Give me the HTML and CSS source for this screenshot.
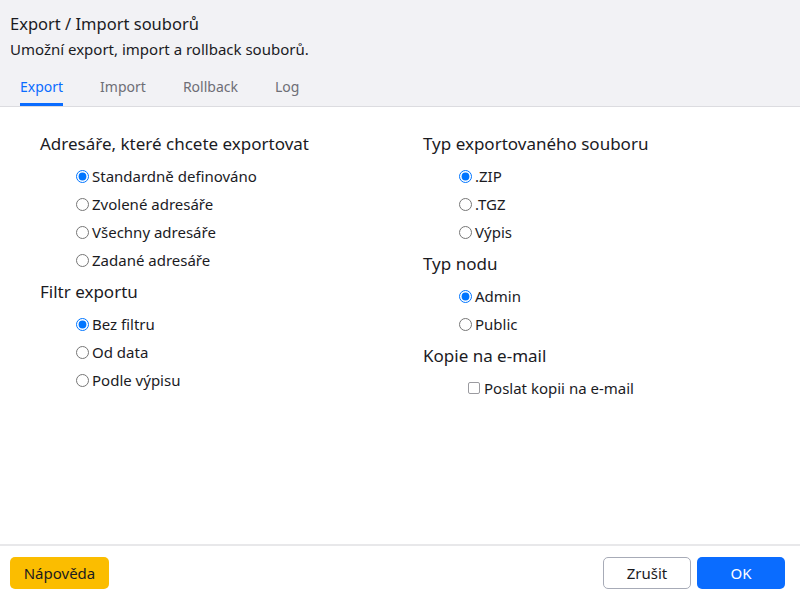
FILE: index.html
```html
<!DOCTYPE html>
<html lang="cs">
<head>
<meta charset="utf-8">
<title>Export / Import souborů</title>
<link rel="stylesheet" href="styles.css">
</head>
<body>
<div class="dialog">
  <header class="head">
    <h1 class="title">Export / Import souborů</h1>
    <p class="subtitle">Umožní export, import a rollback souborů.</p>
    <nav class="tabs">
      <span class="tab active">Export</span>
      <span class="tab">Import</span>
      <span class="tab">Rollback</span>
      <span class="tab">Log</span>
    </nav>
  </header>
  <main class="body">
    <section class="col">
      <h2 class="group-title">Adresáře, které chcete exportovat</h2>
      <div class="options">
        <label class="opt"><input type="radio" name="dir" checked>Standardně definováno</label>
        <label class="opt"><input type="radio" name="dir">Zvolené adresáře</label>
        <label class="opt"><input type="radio" name="dir">Všechny adresáře</label>
        <label class="opt"><input type="radio" name="dir">Zadané adresáře</label>
      </div>
      <h2 class="group-title">Filtr exportu</h2>
      <div class="options">
        <label class="opt"><input type="radio" name="flt" checked>Bez filtru</label>
        <label class="opt"><input type="radio" name="flt">Od data</label>
        <label class="opt"><input type="radio" name="flt">Podle výpisu</label>
      </div>
    </section>
    <section class="col">
      <h2 class="group-title">Typ exportovaného souboru</h2>
      <div class="options">
        <label class="opt"><input type="radio" name="typ" checked>.ZIP</label>
        <label class="opt"><input type="radio" name="typ">.TGZ</label>
        <label class="opt"><input type="radio" name="typ">Výpis</label>
      </div>
      <h2 class="group-title">Typ nodu</h2>
      <div class="options">
        <label class="opt"><input type="radio" name="node" checked>Admin</label>
        <label class="opt"><input type="radio" name="node">Public</label>
      </div>
      <h2 class="group-title">Kopie na e-mail</h2>
      <div class="options checks">
        <label class="opt"><input type="checkbox" class="check">Poslat kopii na e-mail</label>
      </div>
    </section>
  </main>
  <footer class="foot">
    <button class="btn btn-help">Nápověda</button>
    <div class="actions">
      <button class="btn btn-cancel">Zrušit</button>
      <button class="btn btn-ok">OK</button>
    </div>
  </footer>
</div>
</body>
</html>
```
FILE: styles.css
```css
* { box-sizing: border-box; }
html, body { margin: 0; padding: 0; }
body {
  font-family: "Noto Sans", "Open Sans", sans-serif;
  color: #1b1b1f;
  background: #fff;
  width: 800px;
  height: 600px;
  overflow: hidden;
}
.dialog {
  display: flex;
  flex-direction: column;
  height: 600px;
}
.head {
  background: #f2f2f5;
  border-bottom: 1px solid #dcdce0;
  padding: 13px 10px 0 10px;
}
.title {
  font-size: 16.5px;
  font-weight: 400;
  margin: 0;
  line-height: 22px;
}
.subtitle {
  font-size: 15px;
  margin: 4px 0 0 0;
  line-height: 20px;
}
.tabs {
  display: flex;
  gap: 37px;
  margin-top: 10px;
  padding-left: 10px;
}
.tab {
  font-size: 14px;
  color: #6e6e76;
  padding: 8px 0 6px 0;
  line-height: 20px;
  border-bottom: 3px solid transparent;
}
.tab.active {
  color: #0a6cff;
  border-bottom-color: #0a6cff;
}
.body {
  flex: 1;
  display: grid;
  grid-template-columns: 383px 1fr;
  padding: 22px 0 0 40px;
}
.group-title {
  font-size: 17px;
  font-weight: 400;
  margin: 0;
  line-height: 30px;
}
.options {
  display: flex;
  flex-direction: column;
  padding: 3px 0 3px 31px;
}
.options.checks { padding-left: 40px; padding-top: 3px; }
.opt {
  font-size: 15px;
  line-height: 28px;
  display: flex;
  align-items: center;
}
.opt input {
  margin: 0 3px 0 5px;
  width: 13px;
  height: 13px;
}
.opt .check {
  appearance: none;
  -webkit-appearance: none;
  width: 12px;
  height: 12px;
  margin: 0 4px 0 5px;
  border: 1px solid #9b9ba0;
  border-radius: 2px;
  background: #fff;
}
.foot {
  border-top: 2px solid #e8e8ea;
  display: flex;
  justify-content: space-between;
  align-items: center;
  padding: 11px 15px 11px 10px;
}
.actions { display: flex; gap: 6px; }
.btn {
  font-family: inherit;
  font-size: 15px;
  height: 32px;
  border-radius: 5px;
  border: 1px solid transparent;
  color: #1b1b1f;
  cursor: pointer;
}
.btn-help {
  background: #fbbd00;
  width: 99px;
}
.btn-cancel {
  background: #fff;
  border-color: #a7abb7;
  width: 88px;
}
.btn-ok {
  background: #0a6cff;
  color: #fff;
  width: 88px;
}
```
